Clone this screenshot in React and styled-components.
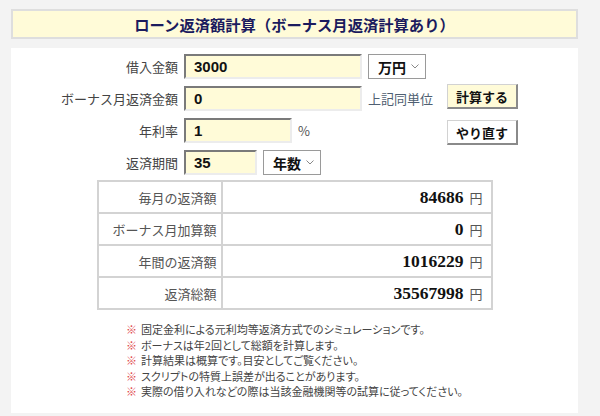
import React from 'react';
import styled, { createGlobalStyle } from 'styled-components';

const GlobalStyle = createGlobalStyle`
  html, body {
    margin: 0;
    padding: 0;
    background: #f3f3f3;
  }
  body {
    font-family: "Noto Sans CJK JP", "Liberation Sans", sans-serif;
  }
`;

const Page = styled.div`
  width: 567px;
  padding: 9px 0 4px 11px;
`;

const Header = styled.h1`
  margin: 0;
  height: 30px;
  box-sizing: border-box;
  border: 2px solid #dedede;
  background: #fffbd8;
  color: #1b1b5e;
  font-size: 15.3px;
  font-weight: 700;
  line-height: 26px;
  text-align: center;
`;

const Panel = styled.div`
  margin-top: 9px;
  background: #fff;
  padding: 6px 0 13px;
`;

const Form = styled.div`
  display: grid;
  grid-template-columns: 167px 257px auto;
  grid-auto-rows: 25px;
  column-gap: 6px;
  row-gap: 7px;
`;

const Label = styled.div`
  font-size: 13px;
  color: #444;
  text-align: right;
  line-height: 25px;
  grid-column: 1;
`;

const Field = styled.div`
  display: flex;
  align-items: center;
  gap: 6px;
  grid-column: 2;
`;

const Input = styled.input`
  box-sizing: border-box;
  width: ${({ $w }) => $w}px;
  height: 25px;
  border: 2px solid;
  border-color: #7a7a7a #ececec #ececec #7a7a7a;
  background: #fffbd8;
  padding: 0 0 0 8px;
  font-family: "Liberation Sans", sans-serif;
  font-weight: 700;
  font-size: 15px;
  color: #111;
  outline: none;
`;

const SelectWrap = styled.div`
  position: relative;
  display: inline-block;
`;

const Select = styled.select`
  appearance: none;
  box-sizing: border-box;
  width: 58px;
  height: 25px;
  border: 1px solid #9a9a9a;
  background: #fff;
  padding: 0 0 0 9px;
  font-family: "Noto Sans CJK JP", sans-serif;
  font-weight: 700;
  font-size: 14px;
  color: #111;
  outline: none;
`;

const Chevron = styled.svg`
  position: absolute;
  right: 7px;
  top: 10px;
  pointer-events: none;
`;

const Unit = styled.span`
  font-size: 13px;
  color: ${({ $blue }) => ($blue ? '#4f5f72' : '#555')};
`;

const Button = styled.button`
  grid-column: 3;
  width: 71px;
  height: 25px;
  box-sizing: border-box;
  margin-top: ${({ $shift }) => $shift}px;
  border: 1px solid #d2d2d2;
  border-right: 2px solid #8a8a8a;
  border-bottom: 2px solid #8a8a8a;
  background: ${({ $primary }) => ($primary ? '#fffbd8' : '#fff')};
  font-family: "Noto Sans CJK JP", sans-serif;
  font-weight: 700;
  font-size: 13px;
  color: #111;
  padding: 0;
`;

const Result = styled.table`
  margin: 5px auto 0;
  width: 396px;
  border-collapse: collapse;
  border: 2px solid #d3d3d3;
`;

const Cell = styled.td`
  border: 2px solid #d3d3d3;
  height: 30px;
  padding: 0 ${({ $value }) => ($value ? '8px' : '4px')} 0 0;
  text-align: right;
  width: ${({ $value }) => ($value ? 'auto' : '118px')};
  font-size: 13px;
  color: #555;
`;

const Amount = styled.span`
  font-family: "Liberation Serif", serif;
  font-weight: 700;
  font-size: 17.5px;
  color: #111;
  margin-right: 6px;
`;

const Yen = styled.span`
  font-size: 13px;
  color: #555;
`;

const Notes = styled.ul`
  display: table;
  margin: 12px auto 0;
  padding: 0;
  list-style: none;
  font-size: 11px;
  line-height: 15.6px;
  color: #444;
  font-feature-settings: "palt";
`;

const Note = styled.li`
  &::before {
    content: '※';
    color: #e0474c;
    margin-right: 4px;
  }
`;

const ChevronIcon = () => (
  <Chevron width="8" height="5" viewBox="0 0 8 5">
    <path d="M0.5 0.5 L4 4 L7.5 0.5" fill="none" stroke="#888" strokeWidth="1" />
  </Chevron>
);

const results = [
  { label: '毎月の返済額', value: '84686' },
  { label: 'ボーナス月加算額', value: '0' },
  { label: '年間の返済額', value: '1016229' },
  { label: '返済総額', value: '35567998' },
];

const notes = [
  '固定金利による元利均等返済方式でのシミュレーションです。',
  'ボーナスは年2回として総額を計算します。',
  '計算結果は概算です。目安としてご覧ください。',
  'スクリプトの特質上誤差が出ることがあります。',
  '実際の借り入れなどの際は当該金融機関等の試算に従ってください。',
];

function App() {
  return (
    <Page>
      <GlobalStyle />
      <Header>ローン返済額計算（ボーナス月返済計算あり）</Header>
      <Panel>
        <Form>
          <Label>借入金額</Label>
          <Field>
            <Input $w={178} defaultValue="3000" />
            <SelectWrap>
              <Select defaultValue="man">
                <option value="man">万円</option>
                <option value="en">円</option>
              </Select>
              <ChevronIcon />
            </SelectWrap>
          </Field>

          <Label>ボーナス月返済金額</Label>
          <Field>
            <Input $w={178} defaultValue="0" />
            <Unit $blue>上記同単位</Unit>
          </Field>
          <Button $primary $shift={-2}>計算する</Button>

          <Label>年利率</Label>
          <Field>
            <Input $w={108} defaultValue="1" />
            <Unit>%</Unit>
          </Field>
          <Button $shift={2}>やり直す</Button>

          <Label>返済期間</Label>
          <Field>
            <Input $w={73} defaultValue="35" />
            <SelectWrap>
              <Select defaultValue="year">
                <option value="year">年数</option>
                <option value="month">月数</option>
              </Select>
              <ChevronIcon />
            </SelectWrap>
          </Field>
        </Form>

        <Result>
          <tbody>
            {results.map(({ label, value }) => (
              <tr key={label}>
                <Cell>{label}</Cell>
                <Cell $value>
                  <Amount>{value}</Amount>
                  <Yen>円</Yen>
                </Cell>
              </tr>
            ))}
          </tbody>
        </Result>

        <Notes>
          {notes.map((n) => (
            <Note key={n}>{n}</Note>
          ))}
        </Notes>
      </Panel>
    </Page>
  );
}

export default App;
